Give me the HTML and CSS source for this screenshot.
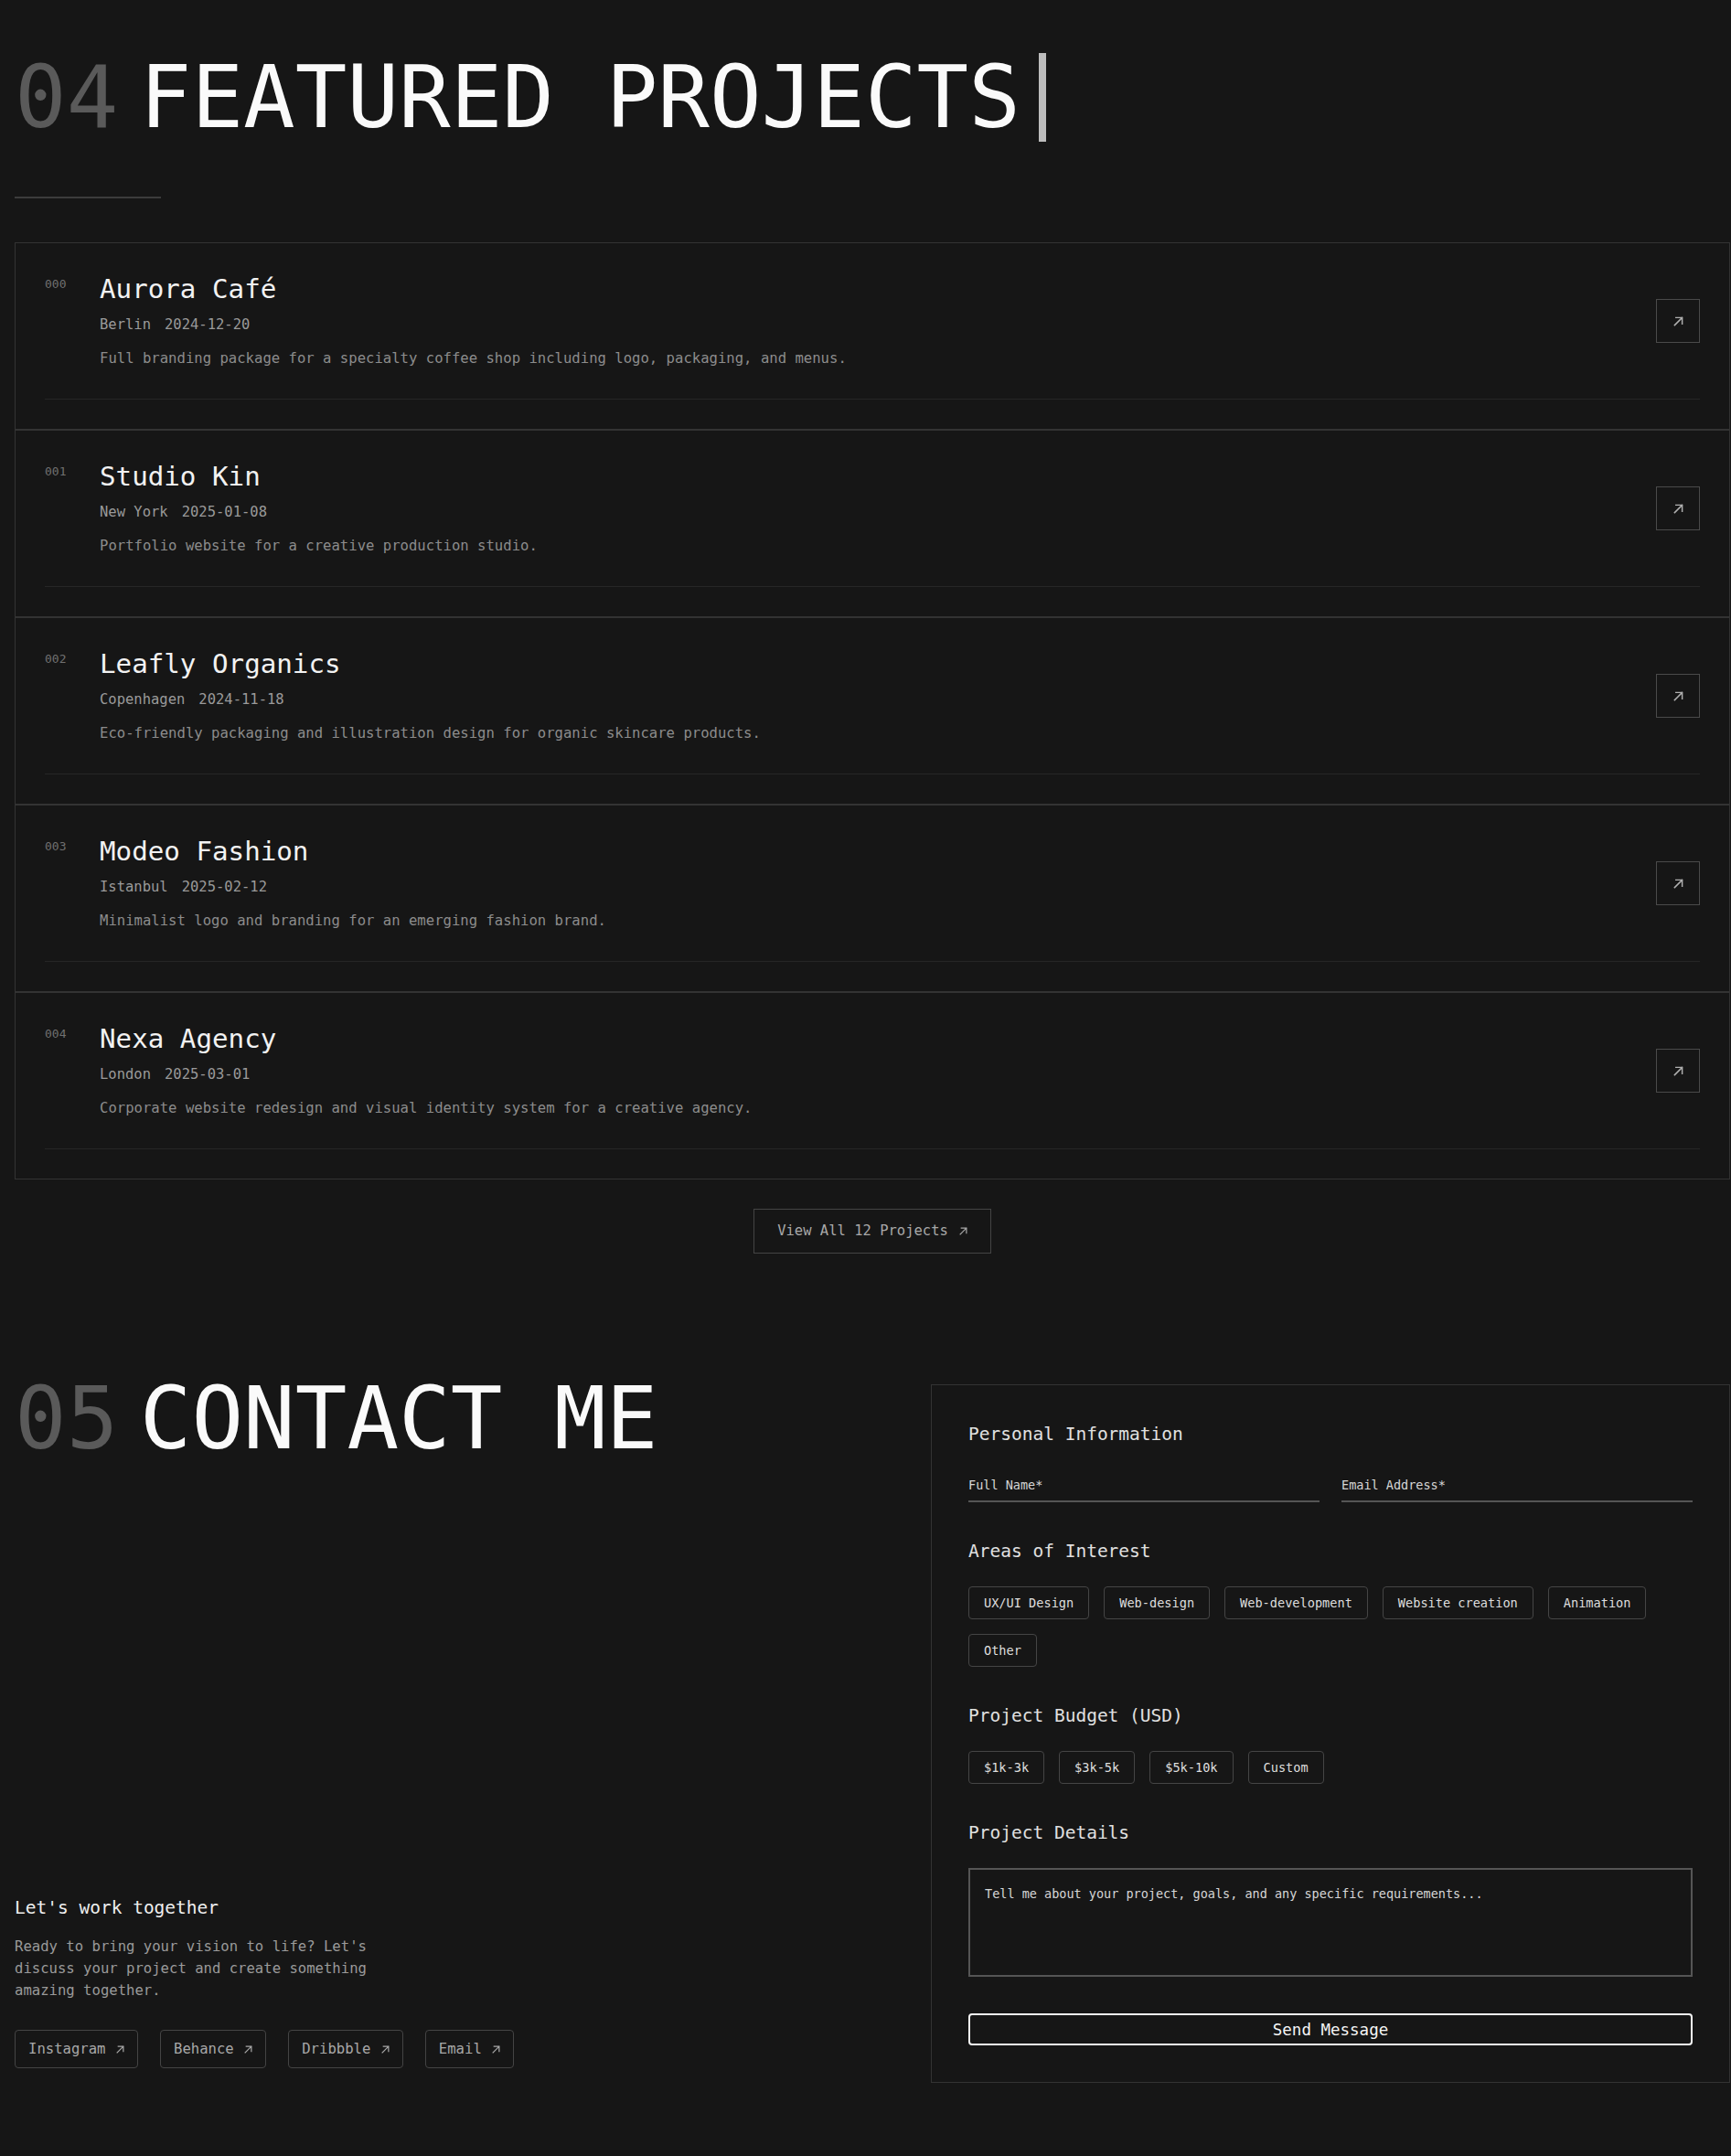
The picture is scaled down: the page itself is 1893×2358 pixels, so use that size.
FILE: index.html
```html
<!DOCTYPE html>
<html lang="en">
<head>
<meta charset="utf-8">
<title>Featured Projects</title>
<link rel="stylesheet" href="styles.css">
</head>
<body>
<main class="page">
  <section class="projects">
    <h2 class="section-title with-cursor"><span class="num">04</span><span class="title-text">FEATURED PROJECTS</span><span class="cursor"></span></h2>
    <div class="rule"></div>
    <ul class="project-list">
      <li class="project">
        <div class="project-inner">
          <span class="idx">000</span>
          <div class="project-body">
            <h3 class="project-name">Aurora Café</h3>
            <div class="meta"><span>Berlin</span><span>2024-12-20</span></div>
            <p class="desc">Full branding package for a specialty coffee shop including logo, packaging, and menus.</p>
          </div>
          <a class="open-btn" href="#"><svg viewBox="0 0 12 12" width="11" height="11"><path d="M1.5 10.5L10.5 1.5M3 1.5h7.5V9"/></svg></a>
        </div>
      </li>
      <li class="project">
        <div class="project-inner">
          <span class="idx">001</span>
          <div class="project-body">
            <h3 class="project-name">Studio Kin</h3>
            <div class="meta"><span>New York</span><span>2025-01-08</span></div>
            <p class="desc">Portfolio website for a creative production studio.</p>
          </div>
          <a class="open-btn" href="#"><svg viewBox="0 0 12 12" width="11" height="11"><path d="M1.5 10.5L10.5 1.5M3 1.5h7.5V9"/></svg></a>
        </div>
      </li>
      <li class="project">
        <div class="project-inner">
          <span class="idx">002</span>
          <div class="project-body">
            <h3 class="project-name">Leafly Organics</h3>
            <div class="meta"><span>Copenhagen</span><span>2024-11-18</span></div>
            <p class="desc">Eco-friendly packaging and illustration design for organic skincare products.</p>
          </div>
          <a class="open-btn" href="#"><svg viewBox="0 0 12 12" width="11" height="11"><path d="M1.5 10.5L10.5 1.5M3 1.5h7.5V9"/></svg></a>
        </div>
      </li>
      <li class="project">
        <div class="project-inner">
          <span class="idx">003</span>
          <div class="project-body">
            <h3 class="project-name">Modeo Fashion</h3>
            <div class="meta"><span>Istanbul</span><span>2025-02-12</span></div>
            <p class="desc">Minimalist logo and branding for an emerging fashion brand.</p>
          </div>
          <a class="open-btn" href="#"><svg viewBox="0 0 12 12" width="11" height="11"><path d="M1.5 10.5L10.5 1.5M3 1.5h7.5V9"/></svg></a>
        </div>
      </li>
      <li class="project">
        <div class="project-inner">
          <span class="idx">004</span>
          <div class="project-body">
            <h3 class="project-name">Nexa Agency</h3>
            <div class="meta"><span>London</span><span>2025-03-01</span></div>
            <p class="desc">Corporate website redesign and visual identity system for a creative agency.</p>
          </div>
          <a class="open-btn" href="#"><svg viewBox="0 0 12 12" width="11" height="11"><path d="M1.5 10.5L10.5 1.5M3 1.5h7.5V9"/></svg></a>
        </div>
      </li>
    </ul>
    <div class="view-all-wrap">
      <a class="view-all" href="#">View All 12 Projects<svg viewBox="0 0 12 12" width="9" height="9"><path d="M1.5 10.5L10.5 1.5M3 1.5h7.5V9"/></svg></a>
    </div>
  </section>

  <section class="contact">
    <div class="contact-left">
      <h2 class="section-title"><span class="num">05</span><span class="title-text">CONTACT ME</span></h2>
      <div class="together">
        <h3 class="together-title">Let's work together</h3>
        <p class="together-text">Ready to bring your vision to life? Let's discuss your project and create something amazing together.</p>
        <div class="socials">
          <a class="social" href="#">Instagram<svg viewBox="0 0 12 12" width="9" height="9"><path d="M1.5 10.5L10.5 1.5M3 1.5h7.5V9"/></svg></a>
          <a class="social" href="#">Behance<svg viewBox="0 0 12 12" width="9" height="9"><path d="M1.5 10.5L10.5 1.5M3 1.5h7.5V9"/></svg></a>
          <a class="social" href="#">Dribbble<svg viewBox="0 0 12 12" width="9" height="9"><path d="M1.5 10.5L10.5 1.5M3 1.5h7.5V9"/></svg></a>
          <a class="social" href="#">Email<svg viewBox="0 0 12 12" width="9" height="9"><path d="M1.5 10.5L10.5 1.5M3 1.5h7.5V9"/></svg></a>
        </div>
      </div>
    </div>

    <form class="contact-form">
      <div class="form-section">
        <h4 class="form-heading">Personal Information</h4>
        <div class="fields">
          <input class="field" type="text" placeholder="Full Name*">
          <input class="field" type="email" placeholder="Email Address*">
        </div>
      </div>
      <div class="form-section">
        <h4 class="form-heading">Areas of Interest</h4>
        <div class="chips">
          <button type="button" class="chip">UX/UI Design</button>
          <button type="button" class="chip">Web-design</button>
          <button type="button" class="chip">Web-development</button>
          <button type="button" class="chip">Website creation</button>
          <button type="button" class="chip">Animation</button>
          <button type="button" class="chip">Other</button>
        </div>
      </div>
      <div class="form-section">
        <h4 class="form-heading">Project Budget (USD)</h4>
        <div class="chips">
          <button type="button" class="chip">$1k-3k</button>
          <button type="button" class="chip">$3k-5k</button>
          <button type="button" class="chip">$5k-10k</button>
          <button type="button" class="chip">Custom</button>
        </div>
      </div>
      <div class="form-section">
        <h4 class="form-heading">Project Details</h4>
        <textarea class="details" placeholder="Tell me about your project, goals, and any specific requirements..."></textarea>
      </div>
      <button type="submit" class="send">Send Message</button>
    </form>
  </section>
</main>
</body>
</html>
```
FILE: styles.css
```css
* { box-sizing: border-box; }

html, body {
  margin: 0;
  background: #161616;
}

body {
  color: #f2f2f2;
  font-family: "DejaVu Sans Mono", "Liberation Mono", monospace;
}

a { text-decoration: none; color: inherit; }

svg path {
  fill: none;
  stroke: currentColor;
  stroke-width: 1.6;
  stroke-linecap: square;
}

.page {
  padding: 0 1px 0 16px;
}

/* ---------- section titles ---------- */
.projects {
  padding-top: 58px;
}

.section-title {
  display: flex;
  align-items: center;
  margin: 0;
  font-size: 94.1px;
  line-height: 0.8;
  font-weight: 400;
  white-space: pre;
  letter-spacing: 0;
}

.section-title .num {
  color: #5a5a5a;
  margin-right: 23.5px;
}

.section-title .title-text {
  color: #fafafa;
}

.cursor {
  display: inline-block;
  width: 8px;
  height: 97px;
  margin-left: 20px;
  background: #bdbdbd;
}

.rule {
  width: 160px;
  height: 2px;
  margin-top: 60px;
  background: #3c3c3c;
}

/* ---------- project list ---------- */
.project-list {
  list-style: none;
  margin: 48px 0 0;
  padding: 0;
}

.project {
  border: 1px solid #333333;
  padding: 0 32px 32px;
}

.project-inner {
  display: flex;
  align-items: center;
  padding: 32px 0;
  border-bottom: 1px solid #262626;
}

.idx {
  align-self: flex-start;
  width: 60px;
  flex: none;
  padding-top: 3px;
  font-size: 13px;
  line-height: 20px;
  color: #707070;
}

.project-body {
  flex: 1;
}

.project-name {
  margin: 0;
  font-size: 29.2px;
  line-height: 36px;
  font-weight: 400;
  color: #f2f2f2;
}

.meta {
  display: flex;
  gap: 15px;
  margin-top: 11px;
  font-size: 15.5px;
  line-height: 20px;
  color: #9a9a9a;
}

.desc {
  margin: 15px 0 0;
  font-size: 15.6px;
  line-height: 24px;
  color: #8c8c8c;
}

.open-btn {
  flex: none;
  width: 48px;
  height: 48px;
  display: flex;
  align-items: center;
  justify-content: center;
  border: 1px solid #4a4a4a;
  color: #b0b0b0;
}

.view-all-wrap {
  display: flex;
  justify-content: center;
  margin-top: 32px;
}

.view-all {
  display: flex;
  align-items: center;
  gap: 12px;
  padding: 13px 25px;
  border: 1px solid #444444;
  font-size: 15.5px;
  line-height: 21px;
  color: #a8a8a8;
}

/* ---------- contact ---------- */
.contact {
  display: grid;
  grid-template-columns: 1fr 1fr;
  gap: 128px;
  margin-top: 143px;
  padding-bottom: 80px;
}

.contact-left {
  display: flex;
  flex-direction: column;
  justify-content: space-between;
}

.together {
  padding-bottom: 16px;
}

.together-title {
  margin: 0;
  font-size: 19.5px;
  line-height: 28px;
  font-weight: 400;
  color: #eeeeee;
}

.together-text {
  margin: 16px 0 0;
  max-width: 420px;
  font-size: 15.6px;
  line-height: 24px;
  color: #9a9a9a;
}

.socials {
  display: flex;
  gap: 24px;
  margin-top: 31px;
}

.social {
  display: flex;
  align-items: center;
  gap: 11.5px;
  height: 42px;
  padding: 0 14px;
  border: 1px solid #444444;
  border-radius: 4px;
  font-size: 15.6px;
  color: #a8a8a8;
}

.contact-form {
  border: 1px solid #333333;
  padding: 40px;
  display: flex;
  flex-direction: column;
  gap: 40px;
}

.form-heading {
  margin: 0 0 24px;
  font-size: 19.5px;
  line-height: 28px;
  font-weight: 400;
  color: #e0e0e0;
}

.fields {
  display: grid;
  grid-template-columns: 1fr 1fr;
  gap: 24px;
}

.field {
  width: 100%;
  height: 36px;
  padding: 7px 0;
  background: transparent;
  border: none;
  border-bottom: 2px solid #555555;
  font-family: inherit;
  font-size: 13.5px;
  line-height: 20px;
  color: #dddddd;
  outline: none;
}

.field::placeholder { color: #d6d6d6; opacity: 1; }

.chips {
  display: flex;
  flex-wrap: wrap;
  gap: 16px;
}

.chip {
  height: 36px;
  padding: 0 16px;
  background: transparent;
  border: 1px solid #454545;
  border-radius: 4px;
  font-family: inherit;
  font-size: 13.6px;
  color: #dedede;
}

.details {
  display: block;
  width: 100%;
  height: 119px;
  padding: 16px;
  background: transparent;
  border: 2px solid #555555;
  resize: none;
  font-family: inherit;
  font-size: 13.5px;
  line-height: 20px;
  color: #dddddd;
  outline: none;
}

.details::placeholder { color: #d6d6d6; opacity: 1; }

.send {
  width: 100%;
  height: 35px;
  background: transparent;
  border: 2px solid #f5f5f5;
  border-radius: 4px;
  font-family: inherit;
  font-size: 17.5px;
  color: #f5f5f5;
}
```
